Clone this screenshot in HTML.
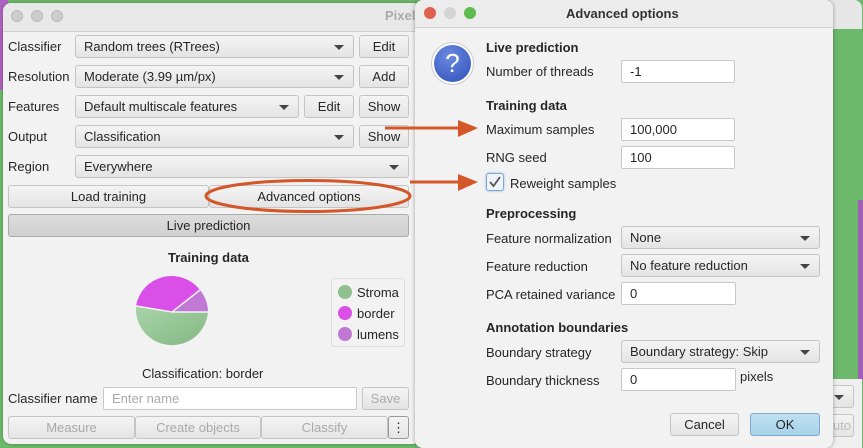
<!DOCTYPE html><html><head><style>
*{box-sizing:border-box;margin:0;padding:0}
body{width:863px;height:448px;overflow:hidden;position:relative;background:#6cb86a;font-family:"Liberation Sans",sans-serif;font-size:13px;color:#262626}
.a{position:absolute}
.win{background:#f2f2f2}
.cb{position:absolute;height:23px;border:1px solid #c4c4c4;border-radius:3px;background:linear-gradient(#f4f4f4,#e4e4e4);padding:0 8px;line-height:21px;white-space:nowrap}
.cb.d:after{content:"";position:absolute;right:9px;top:9px;border:5px solid transparent;border-top:5px solid #444;border-bottom:0}
.bt{text-align:center;padding:0}
.in{position:absolute;height:23px;border:1px solid #c8c8c8;border-radius:2px;background:#fff;padding:0 8px;line-height:21px}
.lb{position:absolute;white-space:nowrap}
.h{position:absolute;font-weight:bold;white-space:nowrap}
.dis{color:#a9a9a9}
</style></head><body>
<div class="a" style="left:0;top:0;width:8px;height:90px;background:#b060c0"></div>
<!-- right back window -->
<div class="a" style="left:820px;top:0;width:42px;height:29px;background:#e6e6e6;border-radius:0 8px 0 0"></div>
<div class="a" style="left:858px;top:200px;width:5px;height:180px;background:#a060b8"></div>
<div class="a" style="left:820px;top:379px;width:42px;height:69px;background:#efefef"></div>
<div class="cb d" style="left:820px;top:385px;width:34px"></div>
<div class="cb dis" style="left:820px;top:414px;width:34px;color:#bbb;text-align:right;padding-right:2px">uto</div>

<!-- left window -->
<div class="a win" style="left:3px;top:3px;width:418px;height:441px;border-radius:8px;box-shadow:0 0 3px rgba(0,0,0,.3)"></div>
<div class="a" style="left:3px;top:3px;width:418px;height:29px;background:#e8e8e8;border-radius:8px 8px 0 0;border-bottom:1px solid #d0d0d0"></div>
<div class="a" style="left:11px;top:10px;width:12px;height:12px;border-radius:6px;background:#ccc;border:1px solid #bbb"></div>
<div class="a" style="left:31px;top:10px;width:12px;height:12px;border-radius:6px;background:#ccc;border:1px solid #bbb"></div>
<div class="a" style="left:51px;top:10px;width:12px;height:12px;border-radius:6px;background:#ccc;border:1px solid #bbb"></div>
<div class="h" style="left:385px;top:8px;color:#aaa">Pixel</div>

<div class="lb" style="left:8px;top:39px">Classifier</div>
<div class="cb d" style="left:75px;top:35px;width:279px">Random trees (RTrees)</div>
<div class="cb bt" style="left:359px;top:35px;width:50px">Edit</div>
<div class="lb" style="left:8px;top:69px">Resolution</div>
<div class="cb d" style="left:75px;top:65px;width:279px">Moderate (3.99 µm/px)</div>
<div class="cb bt" style="left:359px;top:65px;width:50px">Add</div>
<div class="lb" style="left:8px;top:99px">Features</div>
<div class="cb d" style="left:75px;top:95px;width:224px">Default multiscale features</div>
<div class="cb bt" style="left:304px;top:95px;width:50px">Edit</div>
<div class="cb bt" style="left:359px;top:95px;width:50px">Show</div>
<div class="lb" style="left:8px;top:129px">Output</div>
<div class="cb d" style="left:75px;top:125px;width:279px">Classification</div>
<div class="cb bt" style="left:359px;top:125px;width:50px">Show</div>
<div class="lb" style="left:8px;top:159px">Region</div>
<div class="cb d" style="left:75px;top:155px;width:334px">Everywhere</div>
<div class="cb bt" style="left:8px;top:185px;width:201px">Load training</div>
<div class="cb bt" style="left:209px;top:185px;width:200px">Advanced options</div>
<div class="cb bt" style="left:8px;top:214px;width:401px;background:linear-gradient(#dcdcdc,#d0d0d0);border-color:#aaa">Live prediction</div>
<div class="h" style="left:168px;top:250px">Training data</div>
<svg class="a" style="left:130px;top:270px" width="84" height="84" viewBox="0 0 84 84">
<defs><linearGradient id="g" x1="0" y1="0" x2="1" y2="1"><stop offset="0" stop-color="#a8d4a8"/><stop offset="1" stop-color="#84b884"/></linearGradient></defs>
<path d="M42 42 L6 36 A36 36 0 1 0 78 42 Z" fill="url(#g)"/>
<path d="M42 42 L70 20 A36 36 0 0 0 6 36 Z" fill="#d94fe8"/>
<path d="M42 42 L78 42 A36 36 0 0 0 70 20 Z" fill="#c078d4"/>
<path d="M6 36 L42 42 L70 20 M42 42 L78 42" stroke="#f2f2f2" stroke-width="1.5" fill="none"/>
</svg>
<div class="a" style="left:331px;top:278px;width:74px;height:69px;border:1px solid #ddd;border-radius:3px"></div>
<div class="a" style="left:338px;top:285px;width:14px;height:14px;border-radius:7px;background:#90c090"></div>
<div class="a" style="left:338px;top:306px;width:14px;height:14px;border-radius:7px;background:#d94fe8"></div>
<div class="a" style="left:338px;top:327px;width:14px;height:14px;border-radius:7px;background:#c078d4"></div>
<div class="lb" style="left:357px;top:285px">Stroma</div>
<div class="lb" style="left:357px;top:306px">border</div>
<div class="lb" style="left:357px;top:327px">lumens</div>
<div class="lb" style="left:142px;top:366px">Classification: border</div>
<div class="lb" style="left:8px;top:391px">Classifier name</div>
<div class="in" style="left:103px;top:387px;width:254px;color:#aaa">Enter name</div>
<div class="cb bt dis" style="left:362px;top:387px;width:47px">Save</div>
<div class="cb bt dis" style="left:8px;top:416px;width:127px">Measure</div>
<div class="cb bt dis" style="left:135px;top:416px;width:126px">Create objects</div>
<div class="cb bt dis" style="left:261px;top:416px;width:127px">Classify</div>
<div class="cb bt" style="left:388px;top:416px;width:21px;border-color:#999">⋮</div>

<!-- dialog -->
<div class="a win" style="left:415px;top:0;width:418px;height:448px;border-radius:8px;box-shadow:0 0 4px rgba(0,0,0,.35)"></div>
<div class="a" style="left:415px;top:0;width:418px;height:28px;background:#ececec;border-radius:8px 8px 0 0;border-bottom:1px solid #d0d0d0"></div>
<div class="a" style="left:424px;top:7px;width:12px;height:12px;border-radius:6px;background:#e0604f"></div>
<div class="a" style="left:444px;top:7px;width:12px;height:12px;border-radius:6px;background:#d4d4d4"></div>
<div class="a" style="left:464px;top:7px;width:12px;height:12px;border-radius:6px;background:#5fba4f"></div>
<div class="h" style="left:566px;top:6px;color:#333">Advanced options</div>
<div class="a" style="left:431px;top:42px;width:43px;height:43px;border-radius:22px;background:#fff;border:1px solid #ccc"></div>
<div class="a" style="left:434px;top:45px;width:37px;height:37px;border-radius:19px;background:radial-gradient(circle at 40% 30%,#6a8ae0,#2e50b8);color:#fff;font-size:26px;text-align:center;line-height:37px">?</div>
<div class="h" style="left:486px;top:40px">Live prediction</div>
<div class="lb" style="left:486px;top:64px">Number of threads</div>
<div class="in" style="left:621px;top:60px;width:114px">-1</div>
<div class="h" style="left:486px;top:98px">Training data</div>
<div class="lb" style="left:486px;top:122px">Maximum samples</div>
<div class="in" style="left:621px;top:118px;width:114px">100,000</div>
<div class="lb" style="left:486px;top:150px">RNG seed</div>
<div class="in" style="left:621px;top:146px;width:114px">100</div>
<div class="a" style="left:486px;top:173px;width:18px;height:18px;border:1px solid #7aa8d8;border-radius:3px;background:#eef4fa;box-shadow:0 0 2px #8ab4e0"></div>
<svg class="a" style="left:488px;top:175px" width="14" height="14"><path d="M2 7 L5.5 11 L12 2" stroke="#555" stroke-width="1.8" fill="none"/></svg>
<div class="lb" style="left:510px;top:176px">Reweight samples</div>
<div class="h" style="left:486px;top:206px">Preprocessing</div>
<div class="lb" style="left:486px;top:231px">Feature normalization</div>
<div class="cb d" style="left:621px;top:226px;width:199px">None</div>
<div class="lb" style="left:486px;top:259px">Feature reduction</div>
<div class="cb d" style="left:621px;top:254px;width:199px">No feature reduction</div>
<div class="lb" style="left:486px;top:287px">PCA retained variance</div>
<div class="in" style="left:621px;top:282px;width:115px">0</div>
<div class="h" style="left:486px;top:320px">Annotation boundaries</div>
<div class="lb" style="left:486px;top:345px">Boundary strategy</div>
<div class="cb d" style="left:621px;top:340px;width:199px">Boundary strategy: Skip</div>
<div class="lb" style="left:486px;top:373px">Boundary thickness</div>
<div class="in" style="left:621px;top:368px;width:115px">0</div>
<div class="lb" style="left:740px;top:369px">pixels</div>
<div class="cb bt" style="left:670px;top:413px;width:69px">Cancel</div>
<div class="cb bt" style="left:750px;top:413px;width:70px;background:linear-gradient(#bfe0f0,#a8d2ea);border-color:#80aac8">OK</div>

<!-- annotations -->
<svg class="a" style="left:0;top:0" width="863" height="448">
<ellipse cx="308" cy="196" rx="102" ry="15.5" fill="none" stroke="#d4572a" stroke-width="3"/>
<path d="M385 128 H462" stroke="#d4572a" stroke-width="3"/><path d="M458 120 L478 128 L458 137 Z" fill="#d4572a"/>
<path d="M410 182 H462" stroke="#d4572a" stroke-width="3"/><path d="M458 174 L478 182 L458 191 Z" fill="#d4572a"/>
</svg>
</body></html>
